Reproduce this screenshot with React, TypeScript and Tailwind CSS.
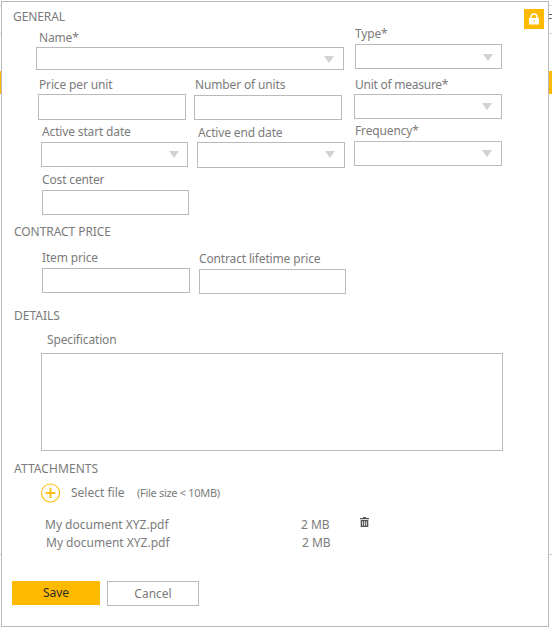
import type { ReactNode } from "react";

function Caret({ className }: { className: string }) {
  return (
    <svg className={className} width="10" height="7" viewBox="0 0 10 7" fill="#d2d2d2">
      <path d="M0 0h10L5 7z" />
    </svg>
  );
}

interface FieldProps {
  label: string;
  className: string;
  labelClass?: string;
  boxClass: string;
  caretClass?: string;
}

function Field({ label, className, labelClass = "pl-px", boxClass, caretClass }: FieldProps) {
  return (
    <div className={`shrink-0 ${className}`}>
      <div className={`h-4 whitespace-nowrap tracking-[-0.15px] ${labelClass}`}>{label}</div>
      <div className={`flex justify-end border border-[#bababa] ${boxClass}`}>
        {caretClass && <Caret className={caretClass} />}
      </div>
    </div>
  );
}

function Heading({ children, className }: { children: ReactNode; className: string }) {
  return <h2 className={`h-4 whitespace-nowrap ${className}`}>{children}</h2>;
}

function Backdrop() {
  return (
    <div className="absolute inset-0 flex flex-col overflow-hidden">
      <div className="mt-[5px] h-[29px] border-y border-[#d9d9d9] text-right text-[11px] leading-[23px] text-[#555]">
        F
      </div>
      <div className="mt-[37px] h-[23px] bg-[#ffba00]" />
      <div className="mt-[460px] h-px bg-[#d0d0d0]" />
    </div>
  );
}

export default function App() {
  return (
    <div className="relative h-[629px] w-[552px] overflow-hidden bg-white p-px font-['Noto_Sans','Open_Sans',sans-serif] text-[12px] leading-4 text-[#7b7b7b]">
      <Backdrop />
      <main className="relative h-[626px] w-[548px] border border-[#b9b9b9] bg-white">
        <button className="absolute top-[7px] right-[4px] flex h-5 w-5 items-center justify-center bg-[#ffba00]">
          <svg width="10" height="12" viewBox="0 0 10 12">
            <path d="M2 5.500V4a3 3 0 0 1 6 0v1.500" fill="none" stroke="#fff" strokeWidth="1.4" />
            <path d="M0 5h10v6.500H0z" fill="#fff" />
            <path d="M4.400 7h1.200v2.500H4.400z" fill="#ffd465" />
          </svg>
        </button>

        <Heading className="mt-[7px] ml-[11px] tracking-[-0.1px]">GENERAL</Heading>
        <div className="flex h-[52px]">
          <Field label="Name*" className="ml-[34px] w-[308px] pt-[5px]" labelClass="pl-[3px]" boxClass="mt-px h-[23px]" caretClass="mt-2 mr-[9px]" />
          <Field label="Type*" className="ml-[11px] w-[147px] pt-px" labelClass="" boxClass="mt-[2px] h-[25px]" caretClass="mt-[9px] mr-[8px]" />
        </div>
        <div className="flex h-[46px]">
          <Field label="Price per unit" className="ml-[36px] w-[148px]" boxClass="mt-px h-[26px]" />
          <Field label="Number of units" className="ml-2 w-[148px]" boxClass="mt-[2px] h-[25px]" />
          <Field label="Unit of measure*" className="ml-3 w-[148px]" labelClass="pl-px tracking-[-0.25px]" boxClass="mt-px h-[25px]" caretClass="mt-[8px] mr-[9px]" />
        </div>
        <div className="flex h-[49px]">
          <Field label="Active start date" className="ml-[39px] w-[147px] pt-px" boxClass="mt-[2px] h-[25px]" caretClass="mt-2 mr-[8px]" />
          <Field label="Active end date" className="ml-[9px] w-[148px] pt-[2px]" boxClass="mt-px h-[26px]" caretClass="mt-2 mr-[9px]" />
          <Field label="Frequency*" className="ml-[9px] w-[148px]" labelClass="pl-px tracking-[-0.3px]" boxClass="mt-[2px] h-[25px]" caretClass="mt-2 mr-[9px]" />
        </div>
        <div className="flex h-[52px]">
          <Field label="Cost center" className="ml-[40px] w-[147px]" labelClass="" boxClass="mt-[2px] h-[25px]" />
        </div>

        <Heading className="ml-[12px] tracking-[-0.06px]">CONTRACT PRICE</Heading>
        <div className="flex h-[68px] pt-[10px]">
          <Field label="Item price" className="ml-[40px] w-[148px]" labelClass="" boxClass="mt-[2px] h-[25px]" />
          <Field label="Contract lifetime price" className="ml-[9px] w-[147px] pt-px" labelClass="" boxClass="mt-[2px] h-[25px]" />
        </div>

        <Heading className="ml-[12px]">DETAILS</Heading>
        <Field label="Specification" className="ml-[39px] w-[462px] pt-2" labelClass="pl-[6px]" boxClass="mt-[5px] h-[98px]" />

        <Heading className="mt-[10px] ml-[12px] tracking-[0.08px]">ATTACHMENTS</Heading>
        <div className="mt-[6px] ml-[38px] flex h-5 items-center">
          <svg width="20" height="20" viewBox="0 0 20 20" fill="none" stroke="#ffc21a">
            <circle cx="10.500" cy="10" r="9" strokeWidth="1.200" />
            <path d="M5.500 10h10M10.500 5v10" strokeWidth="2" />
          </svg>
          <span className="ml-[11px] w-[66px] whitespace-nowrap">Select file</span>
          <span className="text-[11px] tracking-[-0.3px] whitespace-nowrap">(File size &lt; 10MB)</span>
        </div>
        <div className="mt-[14px] ml-[43px] flex h-[18px]">
          <span className="w-[256px]">My document XYZ.pdf</span>
          <span className="w-[59px]">2 MB</span>
          <svg width="9" height="10" viewBox="0 0 9 10" fill="#555">
            <path d="M3 0h3v1h3v1.300H0V1h3zM.7 3h7.600v7H.7zM2.300 4.200v4.600h.8V4.200zM4.100 4.200v4.600h.8V4.200zM5.900 4.200v4.600h.8V4.200z" fillRule="evenodd" />
          </svg>
        </div>
        <div className="ml-[44px] flex h-[46px]">
          <span className="w-[256px]">My document XYZ.pdf</span>
          <span>2 MB</span>
        </div>

        <div className="ml-[10px] flex gap-[7px]">
          <button className="h-6 w-[88px] bg-[#ffba00] text-[#2c2c2c]">Save</button>
          <button className="h-[25px] w-[92px] border border-[#bababa]">Cancel</button>
        </div>
      </main>
    </div>
  );
}
